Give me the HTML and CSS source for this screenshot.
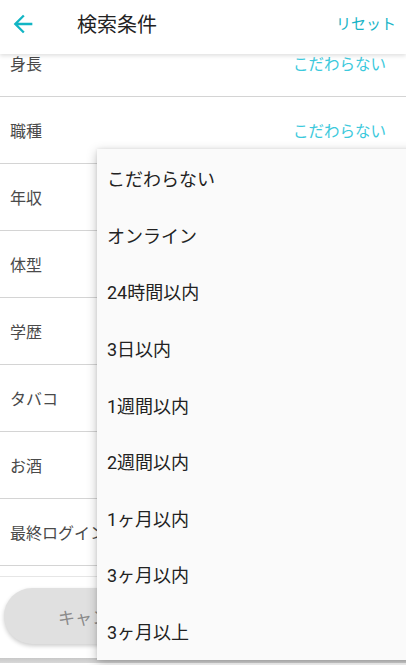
FILE: index.html
```html
<!DOCTYPE html>
<html lang="ja">
<head>
<meta charset="utf-8">
<link rel="stylesheet" href="styles.css">
</head>
<body>
<div class="app">
  <header class="header">
    <svg class="back" viewBox="0 0 24 24" width="28" height="28"><path d="M20 11H7.83l5.59-5.59L12 4l-8 8 8 8 1.41-1.41L7.83 13H20v-2z" fill="#12b5c4"/></svg>
    <div class="title">検索条件</div>
    <div class="reset">リセット</div>
  </header>
  <div class="list">
    <div class="row"><span class="label">身長</span><span class="value">こだわらない</span></div>
    <div class="row"><span class="label">職種</span><span class="value">こだわらない</span></div>
    <div class="row"><span class="label">年収</span><span class="value">こだわらない</span></div>
    <div class="row"><span class="label">体型</span><span class="value">こだわらない</span></div>
    <div class="row"><span class="label">学歴</span><span class="value">こだわらない</span></div>
    <div class="row"><span class="label">タバコ</span><span class="value">こだわらない</span></div>
    <div class="row"><span class="label">お酒</span><span class="value">こだわらない</span></div>
    <div class="row"><span class="label">最終ログイン</span><span class="value">こだわらない</span></div>
  </div>
  <div class="footer">
    <div class="btn cancel">キャンセル</div>
    <div class="btn search">検索する</div>
  </div>
  <div class="navbar"></div>
  <ul class="menu">
    <li>こだわらない</li>
    <li>オンライン</li>
    <li>24時間以内</li>
    <li>3日以内</li>
    <li>1週間以内</li>
    <li>2週間以内</li>
    <li>1ヶ月以内</li>
    <li>3ヶ月以内</li>
    <li>3ヶ月以上</li>
  </ul>
</div>
</body>
</html>
```
FILE: styles.css
```css
* { box-sizing: border-box; }
html, body { margin: 0; padding: 0; }
body {
  width: 406px;
  height: 665px;
  overflow: hidden;
  background: #fff;
  font-family: Roboto, "Noto Sans CJK JP", sans-serif;
}
.app {
  position: relative;
  width: 406px;
  height: 665px;
  display: flex;
  flex-direction: column;
  overflow: hidden;
}
.header {
  position: absolute;
  top: 0; left: 0; right: 0;
  height: 54px;
  background: #fff;
  display: flex;
  align-items: center;
  padding: 0 10px 0 9px;
  box-shadow: 0 2px 4px rgba(0,0,0,0.12);
  z-index: 2;
}
.back { display: block; margin-top: -7px; }
.title {
  margin-left: 40px;
  font-size: 20px;
  color: #222;
  margin-top: -8px;
}
.reset {
  margin-left: auto;
  font-size: 15px;
  color: #17b4c6;
  margin-top: -9px;
}
.list {
  margin-top: 30px;
  display: flex;
  flex-direction: column;
}
.row {
  height: 67px;
  display: flex;
  align-items: center;
  justify-content: space-between;
  padding: 0 20px 0 10px;
  border-bottom: 1px solid #d4d4d4;
}
.label { font-size: 16px; color: #4a4a4a; }
.value { font-size: 15.5px; color: #3cc9dc; }
.footer {
  margin-top: 10px;
  border-top: 1px solid #e6e6e6;
  height: 82px;
  display: flex;
  gap: 12px;
  padding: 11px 4px 14px 4px;
}
.btn {
  flex: 1;
  border-radius: 29px;
  display: flex;
  align-items: center;
  justify-content: center;
  font-size: 17px;
  box-shadow: 0 2px 4px rgba(0,0,0,0.2);
}
.cancel { background: #e0e0e0; color: #8a8a8a; }
.search { background: #17b4c6; color: #fff; }
.navbar {
  height: 5px;
  background: linear-gradient(#c8c8c8, #d8d8d8);
}
.menu {
  position: absolute;
  left: 97px;
  top: 149px;
  width: 320px;
  height: 511px;
  margin: 0;
  padding: 1px 0 0 0;
  list-style: none;
  background: #fafafa;
  box-shadow: 0 3px 10px rgba(0,0,0,0.25), 0 0 3px rgba(0,0,0,0.08);
  z-index: 3;
}
.menu li {
  height: 56.6px;
  display: flex;
  align-items: center;
  padding-left: 10px;
  font-size: 18px;
  color: #222;
}
```
